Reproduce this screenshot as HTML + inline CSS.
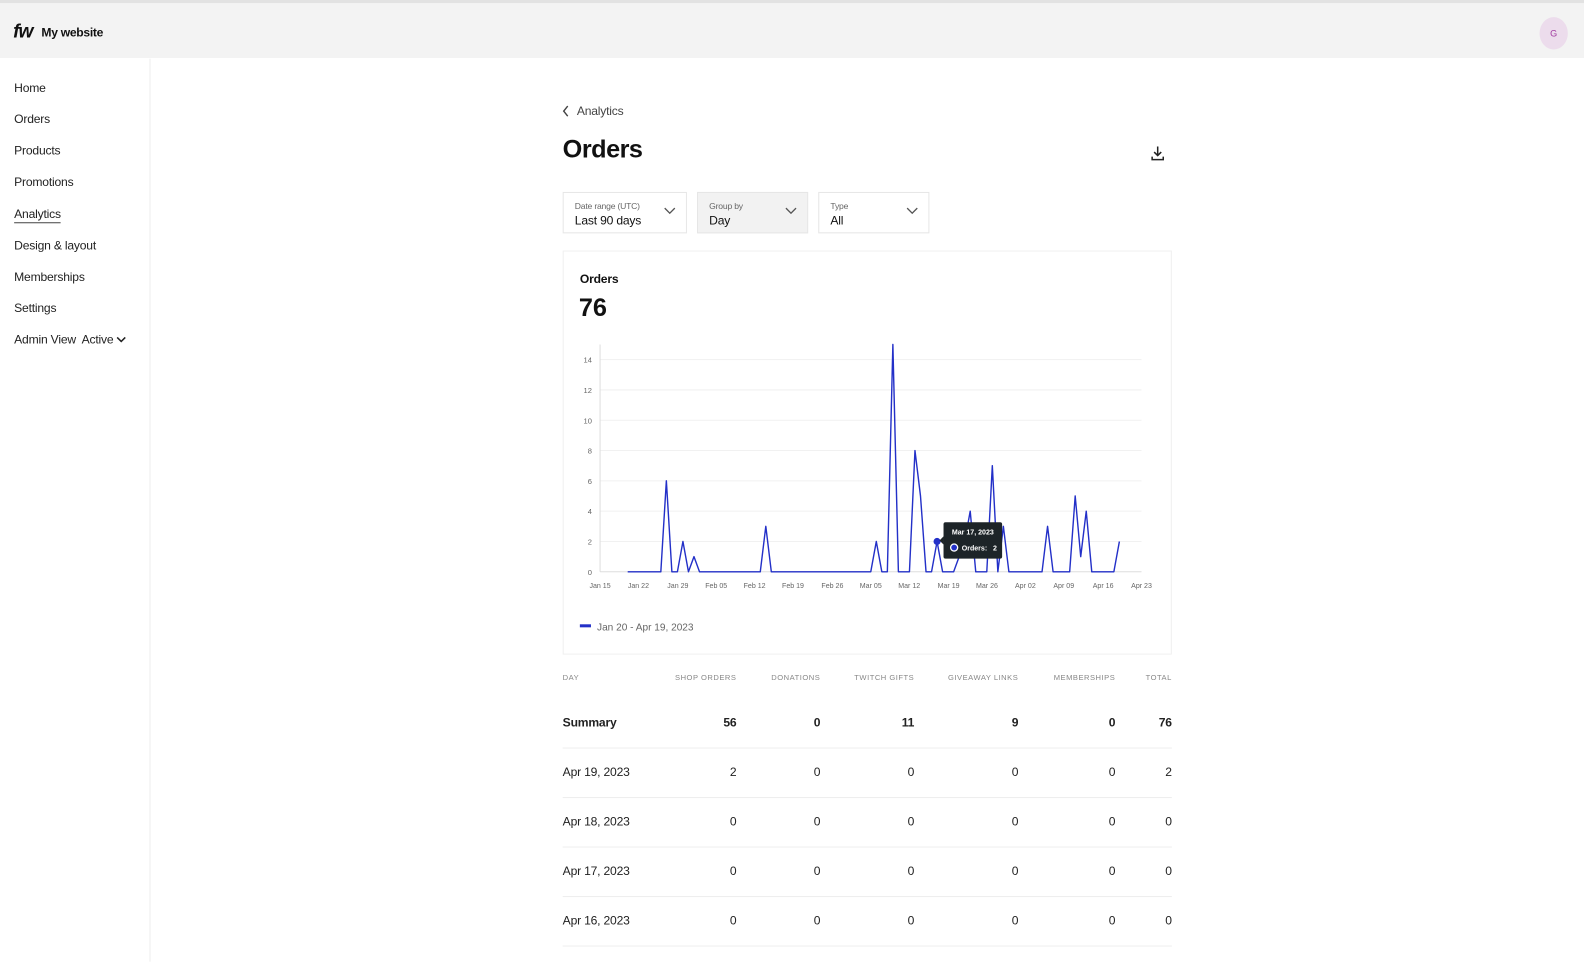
<!DOCTYPE html>
<html><head><meta charset="utf-8"><style>
*{margin:0;padding:0;box-sizing:border-box}
body{width:1584px;height:952px;overflow:hidden;background:#fff;font-family:"Liberation Sans",sans-serif;color:#111;position:relative}
#w{position:absolute;left:0;top:0;width:1568px;height:943px;transform:scale(1.0102);transform-origin:0 0}
.top{position:absolute;left:0;top:0;width:1568px;height:58px;background:#f3f3f3;border-top:3px solid #e2e2e2}
.side{position:absolute;left:0;top:58px;width:149px;height:894px;border-right:1px solid #eee}
.nav{position:absolute;left:14px;font-size:12px;letter-spacing:-0.2px;color:#222}
.abs{position:absolute;white-space:nowrap}
.dd{position:absolute;top:190px;height:41px;border:1px solid #e6e6e6;background:#fff}
.dd .l{position:absolute;left:11px;top:8px;font-size:8.5px;color:#666;letter-spacing:-0.2px}
.dd .v{position:absolute;left:11px;top:20px;font-size:12px;color:#111;letter-spacing:-0.2px}
.dd svg{position:absolute;right:10px;top:14px}
.th{position:absolute;top:666px;font-size:7.5px;letter-spacing:.5px;color:#888}
.td{position:absolute;font-size:12px;letter-spacing:-0.2px;color:#222}
.hr{position:absolute;left:557px;width:603px;height:1px;background:#eee}
</style></head><body>
<div class="top" style="width:1584px"></div>
<div id="w">
<div class="top" style="background:none">
 <div class="abs" style="left:13px;top:18px;font-size:19px;font-weight:bold;font-style:italic;letter-spacing:-1px">fw</div>
 <div class="abs" style="left:41px;top:22px;font-size:12px;font-weight:bold;letter-spacing:-0.3px">My website</div>
 <div class="abs" style="left:1524px;top:14px;width:28px;height:32px;border-radius:50%;background:#ecdcec;color:#a03aa0;font-size:9px;text-align:center;line-height:32px">G</div>
</div>
<div class="side"></div>
<div class="nav" style="top:80px">Home</div>
<div class="nav" style="top:111px">Orders</div>
<div class="nav" style="top:142px">Products</div>
<div class="nav" style="top:173px">Promotions</div>
<div class="nav" style="top:205px;border-bottom:1.5px solid #444;padding-bottom:1px">Analytics</div>
<div class="nav" style="top:236px">Design &amp; layout</div>
<div class="nav" style="top:267px">Memberships</div>
<div class="nav" style="top:298px">Settings</div>
<div class="nav" style="top:329px">Admin View&nbsp; Active <svg width="10" height="8" viewBox="0 0 10 8"><path d="M1 2l4 4 4-4" stroke="#222" stroke-width="1.5" fill="none"/></svg></div>

<svg class="abs" style="left:556px;top:104px" width="8" height="12" viewBox="0 0 8 12"><path d="M6 1L2 6l4 5" stroke="#444" stroke-width="1.4" fill="none"/></svg>
<div class="abs" style="left:571px;top:103px;font-size:12px;letter-spacing:-0.2px;color:#444">Analytics</div>
<div class="abs" style="left:557px;top:134px;font-size:25px;font-weight:bold;letter-spacing:-0.5px">Orders</div>
<svg class="abs" style="left:1139px;top:144px" width="14" height="16" viewBox="0 0 14 16"><path d="M7 1v9M3.5 6.5L7 10l3.5-3.5M1.5 11v3h11v-3" stroke="#222" stroke-width="1.5" fill="none"/></svg>

<div class="dd" style="left:557px;width:123px"><div class="l">Date range (UTC)</div><div class="v">Last 90 days</div><svg width="12" height="8" viewBox="0 0 12 8"><path d="M1 1l5 5 5-5" stroke="#555" stroke-width="1.3" fill="none"/></svg></div>
<div class="dd" style="left:690px;width:110px;background:#f2f2f2"><div class="l">Group by</div><div class="v">Day</div><svg width="12" height="8" viewBox="0 0 12 8"><path d="M1 1l5 5 5-5" stroke="#555" stroke-width="1.3" fill="none"/></svg></div>
<div class="dd" style="left:810px;width:110px"><div class="l">Type</div><div class="v">All</div><svg width="12" height="8" viewBox="0 0 12 8"><path d="M1 1l5 5 5-5" stroke="#555" stroke-width="1.3" fill="none"/></svg></div>

<div class="abs" style="left:557px;top:248px;width:603px;height:400px;border:1px solid #f0f0f0"></div>
<div class="abs" style="left:574px;top:269px;font-size:12px;font-weight:bold;letter-spacing:-0.2px">Orders</div>
<div class="abs" style="left:573px;top:291px;font-size:25px;font-weight:bold">76</div>

<svg class="abs" style="left:0;top:0" width="1568" height="943">
 <g stroke="#f1f1f1" stroke-width="1">
  <line x1="594" x2="1130" y1="356" y2="356"/><line x1="594" x2="1130" y1="386" y2="386"/><line x1="594" x2="1130" y1="416" y2="416"/><line x1="594" x2="1130" y1="446" y2="446"/><line x1="594" x2="1130" y1="476" y2="476"/><line x1="594" x2="1130" y1="506" y2="506"/><line x1="594" x2="1130" y1="536" y2="536"/>
 </g>
 <line x1="594" x2="594" y1="341" y2="566" stroke="#ddd"/>
 <line x1="594" x2="1130" y1="566" y2="566" stroke="#ddd"/>
 <g font-size="7.5" fill="#666" text-anchor="end" font-family="Liberation Sans">
  <text x="586" y="569">0</text><text x="586" y="539">2</text><text x="586" y="509">4</text><text x="586" y="479">6</text><text x="586" y="449">8</text><text x="586" y="419">10</text><text x="586" y="389">12</text><text x="586" y="359">14</text>
 </g>
 <g font-size="7" fill="#666" text-anchor="middle" font-family="Liberation Sans">
  <text x="594" y="582">Jan 15</text><text x="632" y="582">Jan 22</text><text x="671" y="582">Jan 29</text><text x="709" y="582">Feb 05</text><text x="747" y="582">Feb 12</text><text x="785" y="582">Feb 19</text><text x="824" y="582">Feb 26</text><text x="862" y="582">Mar 05</text><text x="900" y="582">Mar 12</text><text x="939" y="582">Mar 19</text><text x="977" y="582">Mar 26</text><text x="1015" y="582">Apr 02</text><text x="1053" y="582">Apr 09</text><text x="1092" y="582">Apr 16</text><text x="1130" y="582">Apr 23</text>
 </g>
 <g transform="translate(594,566) scale(5.469,-15)">
  <polyline vector-effect="non-scaling-stroke" fill="none" stroke="#2330c8" stroke-width="1.4" stroke-linejoin="round" points="5,0 11,0 12,6 13,0 14,0 15,2 16,0 17,1 18,0 29,0 30,3 31,0 49,0 50,2 51,0 52,0 53,15 54,0 56,0 57,8 58,5 59,0 60,0 61,2 62,0 64,0 65,1 66,2 67,4 68,0 70,0 71,7 72,0 73,3 74,0 80,0 81,3 82,0 85,0 86,5 87,1 88,4 89,0 93,0 94,2"/>
 </g>
 <circle cx="927.6" cy="536" r="3.5" fill="#2330c8"/>
 <rect x="934" y="517" width="58" height="36" rx="2" fill="#1d2428"/>
 <path d="M934 531l-4 4 4 4z" fill="#1d2428"/>
 <text x="963" y="529" font-size="7" fill="#fff" font-weight="bold" text-anchor="middle" font-family="Liberation Sans">Mar 17, 2023</text>
 <circle cx="944.5" cy="542" r="3.5" fill="#2330c8" stroke="#fff" stroke-width="1.3"/>
 <text x="952" y="545" font-size="7" fill="#fff" font-weight="bold" font-family="Liberation Sans">Orders:</text>
 <text x="983" y="545" font-size="7" fill="#fff" font-weight="bold" font-family="Liberation Sans">2</text>
 <rect x="574" y="618" width="11" height="3" fill="#2330c8"/>
 <text x="591" y="624" font-size="10" fill="#666" font-family="Liberation Sans">Jan 20 - Apr 19, 2023</text>
</svg>

<div class="th" style="left:557px">DAY</div>
<div class="th" style="right:839px">SHOP ORDERS</div>
<div class="th" style="right:756px">DONATIONS</div>
<div class="th" style="right:663px">TWITCH GIFTS</div>
<div class="th" style="right:560px">GIVEAWAY LINKS</div>
<div class="th" style="right:464px">MEMBERSHIPS</div>
<div class="th" style="right:408px">TOTAL</div>

<div class="td" style="left:557px;top:708px;font-weight:bold">Summary</div>
<div class="td" style="right:839px;top:708px;font-weight:bold">56</div>
<div class="td" style="right:756px;top:708px;font-weight:bold">0</div>
<div class="td" style="right:663px;top:708px;font-weight:bold">11</div>
<div class="td" style="right:560px;top:708px;font-weight:bold">9</div>
<div class="td" style="right:464px;top:708px;font-weight:bold">0</div>
<div class="td" style="right:408px;top:708px;font-weight:bold">76</div>
<div class="hr" style="top:740px"></div>

<div class="td" style="left:557px;top:757px">Apr 19, 2023</div>
<div class="td" style="right:839px;top:757px">2</div><div class="td" style="right:756px;top:757px">0</div><div class="td" style="right:663px;top:757px">0</div><div class="td" style="right:560px;top:757px">0</div><div class="td" style="right:464px;top:757px">0</div><div class="td" style="right:408px;top:757px">2</div>
<div class="hr" style="top:789px"></div>

<div class="td" style="left:557px;top:806px">Apr 18, 2023</div>
<div class="td" style="right:839px;top:806px">0</div><div class="td" style="right:756px;top:806px">0</div><div class="td" style="right:663px;top:806px">0</div><div class="td" style="right:560px;top:806px">0</div><div class="td" style="right:464px;top:806px">0</div><div class="td" style="right:408px;top:806px">0</div>
<div class="hr" style="top:838px"></div>

<div class="td" style="left:557px;top:855px">Apr 17, 2023</div>
<div class="td" style="right:839px;top:855px">0</div><div class="td" style="right:756px;top:855px">0</div><div class="td" style="right:663px;top:855px">0</div><div class="td" style="right:560px;top:855px">0</div><div class="td" style="right:464px;top:855px">0</div><div class="td" style="right:408px;top:855px">0</div>
<div class="hr" style="top:887px"></div>

<div class="td" style="left:557px;top:904px">Apr 16, 2023</div>
<div class="td" style="right:839px;top:904px">0</div><div class="td" style="right:756px;top:904px">0</div><div class="td" style="right:663px;top:904px">0</div><div class="td" style="right:560px;top:904px">0</div><div class="td" style="right:464px;top:904px">0</div><div class="td" style="right:408px;top:904px">0</div>
<div class="hr" style="top:936px"></div>
</div>
</body></html>
